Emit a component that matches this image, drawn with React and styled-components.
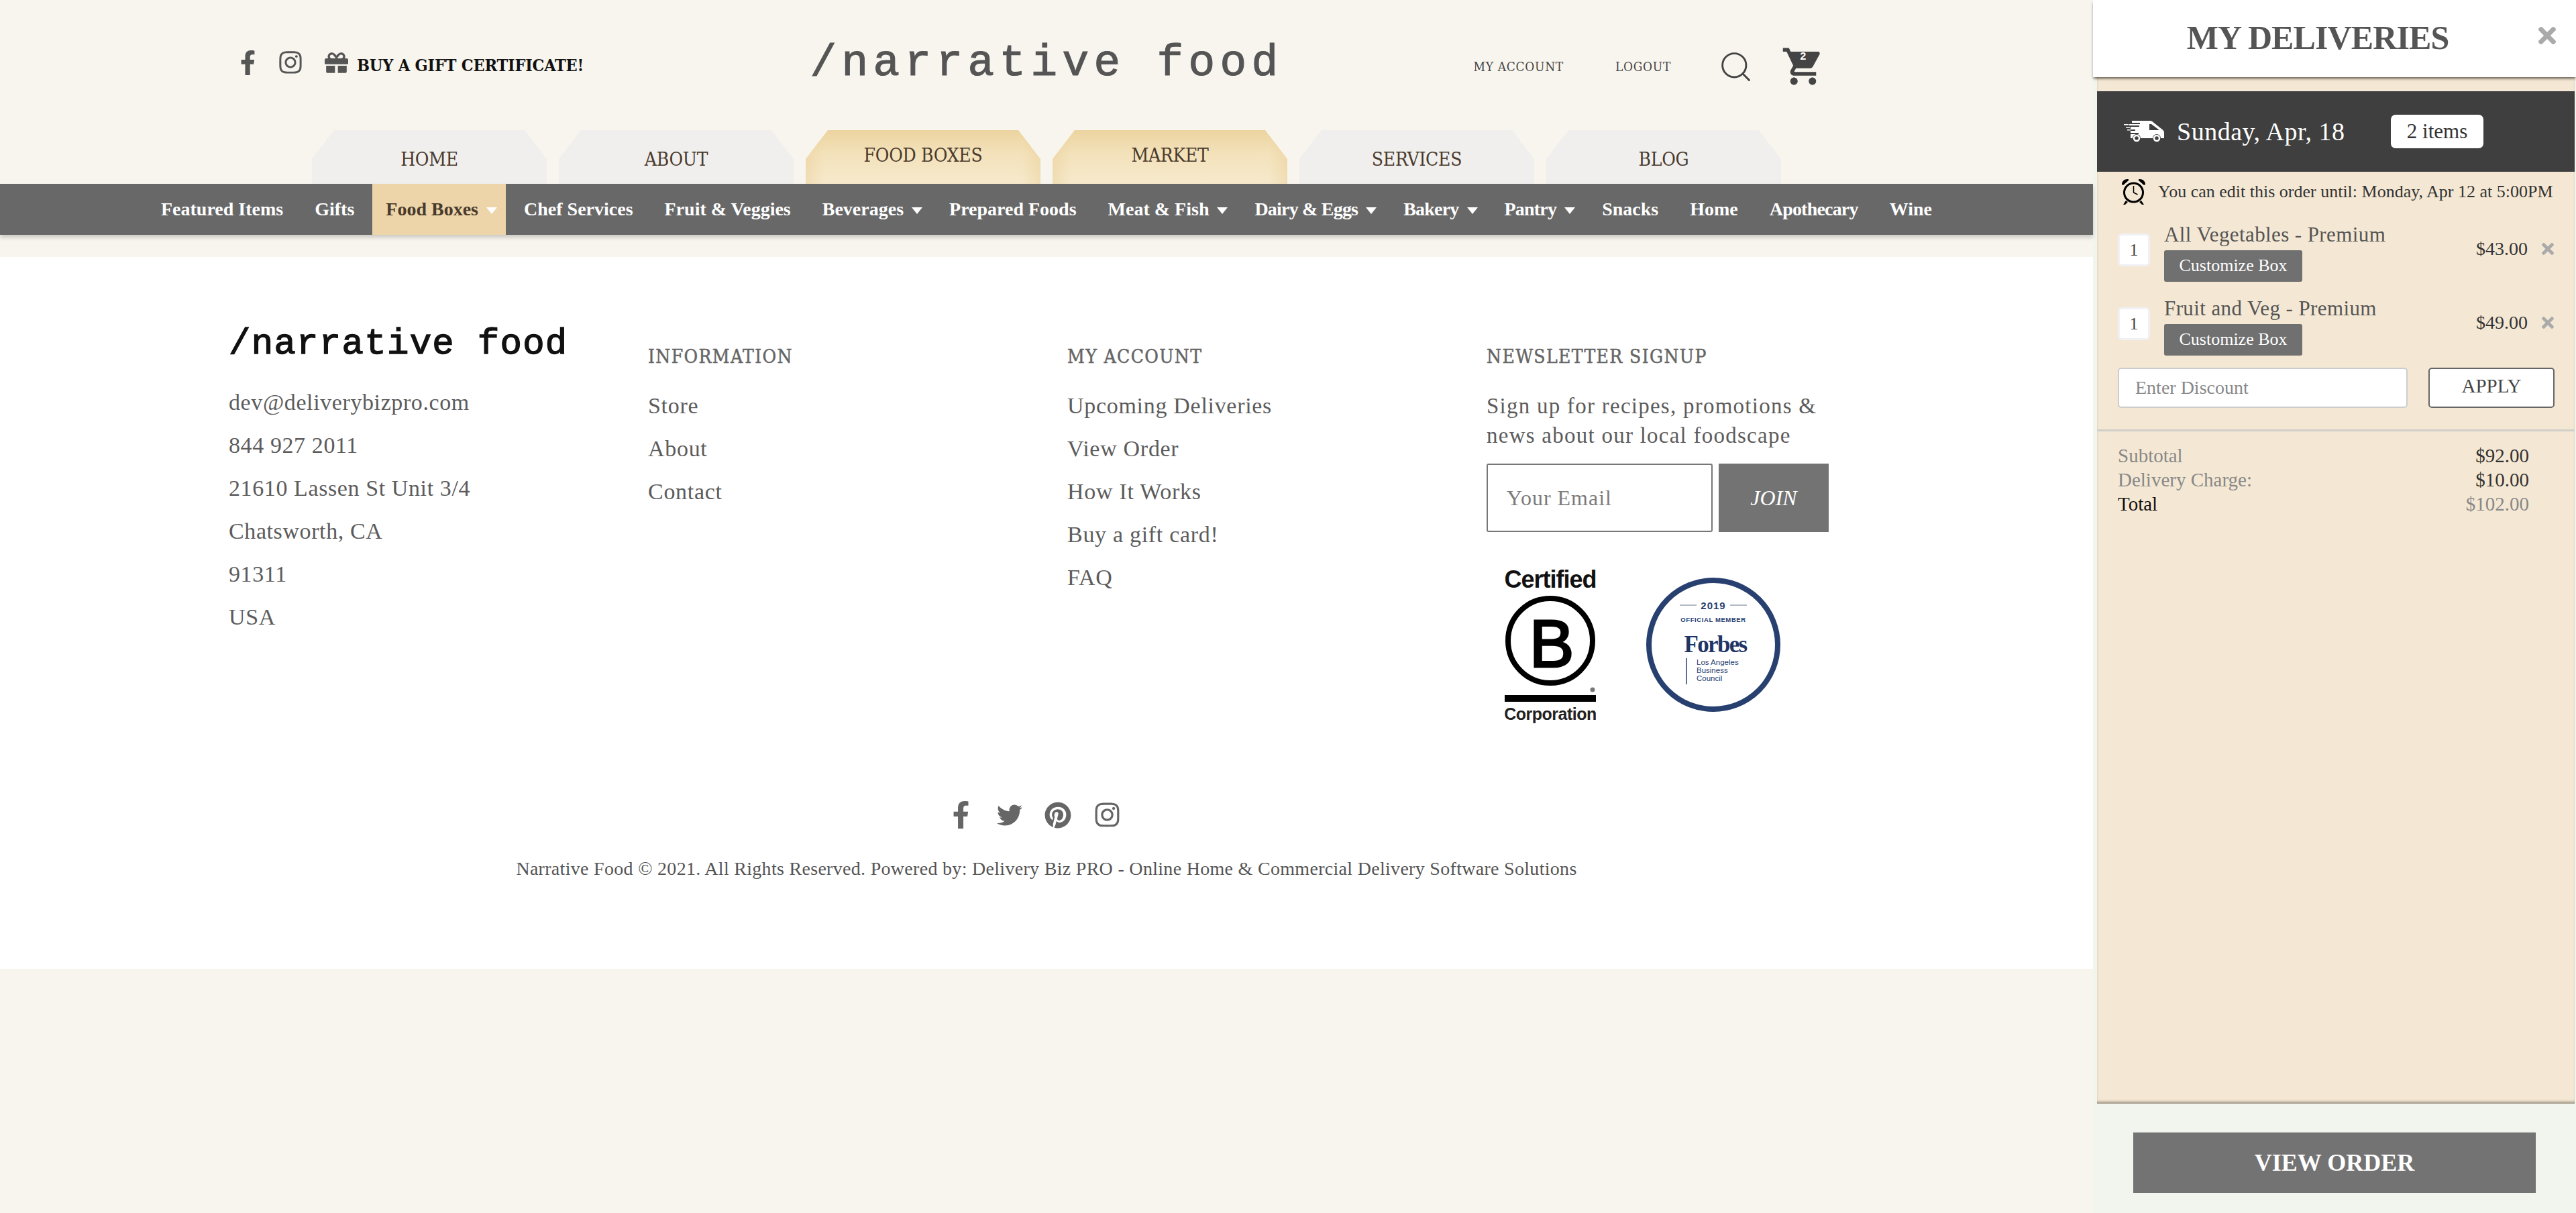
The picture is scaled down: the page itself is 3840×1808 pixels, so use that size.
import React from 'react'
import styled, { createGlobalStyle } from 'styled-components'
import { FaFacebookF, FaInstagram, FaGift, FaTwitter, FaPinterest, FaTimes } from 'react-icons/fa'
import { MdShoppingCart } from 'react-icons/md'
import { Search } from 'lucide-react'

const serif = '"Liberation Serif", "Times New Roman", serif'
const mono = '"Liberation Mono", "Courier New", monospace'
const slab = '"DejaVu Serif Condensed", "DejaVu Serif", serif'
const sans = '"Liberation Sans", Arial, sans-serif'

const tabs = [
  { label: 'HOME' },
  { label: 'ABOUT' },
  { label: 'FOOD BOXES', active: true },
  { label: 'MARKET', active: true },
  { label: 'SERVICES' },
  { label: 'BLOG' },
]

const navItems = [
  { label: 'Featured Items' },
  { label: 'Gifts' },
  { label: 'Food Boxes', arrow: true, active: true },
  { label: 'Chef Services' },
  { label: 'Fruit & Veggies' },
  { label: 'Beverages', arrow: true },
  { label: 'Prepared Foods' },
  { label: 'Meat & Fish', arrow: true },
  { label: 'Dairy & Eggs', arrow: true, tight: true },
  { label: 'Bakery', arrow: true, tight: true },
  { label: 'Pantry', arrow: true, tight: true },
  { label: 'Snacks' },
  { label: 'Home' },
  { label: 'Apothecary', tight: true },
  { label: 'Wine' },
]

const contactLines = ['dev@deliverybizpro.com', '844 927 2011', '21610 Lassen St Unit 3/4', 'Chatsworth, CA', '91311', 'USA']
const infoLinks = ['Store', 'About', 'Contact']
const accountLinks = ['Upcoming Deliveries', 'View Order', 'How It Works', 'Buy a gift card!', 'FAQ']

const orderItems = [
  { name: 'All Vegetables - Premium', price: '$43.00' },
  { name: 'Fruit and Veg - Premium', price: '$49.00' },
]

const TruckIcon = () => (
  <svg width="60" height="32" viewBox="0 0 60 32">
    <path d="M12 0h27c2 0 3 .5 4.500 2L56 12c2.500 1.500 4 3 4 6v8h-5a6 6 0 0 0-12 0H25a6 6 0 0 0-12 0h-3v-6h12v-2H10v-3h7v-2H10V9h13V7H8V5h16V3H12z" fill="#fff" />
    <path d="M41 5h-3v9h15z" fill="#3f3f3f" />
    <path d="M0 5h7v1.500H0zM3 9h6v1.500H3zM5 13h5v1.500H5z" fill="#fff" />
    <circle cx="19" cy="26" r="4" fill="none" stroke="#fff" strokeWidth="2.500" />
    <circle cx="49" cy="26" r="4" fill="none" stroke="#fff" strokeWidth="2.500" />
  </svg>
)

const AlarmIcon = () => (
  <svg width="37" height="40" viewBox="0 0 37 40">
    <circle cx="18.500" cy="21" r="14" fill="none" stroke="#000" strokeWidth="3" />
    <path d="M1 9c0-5 4-8.500 9.500-8l1 1.500L3 10zM36 9c0-5-4-8.500-9.500-8l-1 1.500L34 10z" fill="#000" />
    <path d="M7 33l-4 6h3l4-4zM30 33l4 6h-3l-4-4z" fill="#000" />
    <path d="M18.500 11v10l6 3" fill="none" stroke="#000" strokeWidth="1.500" />
  </svg>
)

const BCorpBadge = () => (
  <BCorpSvg width="136" height="241" viewBox="0 -8 136 241">
    <text x="68" y="26" textAnchor="middle" fontFamily={sans} fontWeight="700" fontSize="36" letterSpacing="-1" fill="#111">Certified</text>
    <circle cx="68" cy="105" r="63" fill="none" stroke="#000" strokeWidth="8" />
    <text x="70" y="144" textAnchor="middle" fontFamily={sans} fontSize="100" fill="#000" stroke="#000" strokeWidth="3">B</text>
    <circle cx="131" cy="178" r="3.500" fill="#777" />
    <rect x="0" y="186" width="136" height="10" fill="#000" />
    <text x="68" y="223" textAnchor="middle" fontFamily={sans} fontWeight="700" fontSize="25" letterSpacing="-0.5" fill="#222">Corporation</text>
  </BCorpSvg>
)

const ForbesBadge = () => (
  <svg width="200" height="200" viewBox="0 0 200 200">
    <circle cx="100" cy="100" r="96" fill="#fff" stroke="#27406f" strokeWidth="8" />
    <path d="M50 41h25M125 41h25" stroke="#9aa3b5" strokeWidth="1.500" />
    <text x="100" y="47" textAnchor="middle" fontFamily={sans} fontSize="15" fontWeight="700" letterSpacing="1" fill="#27406f">2019</text>
    <text x="100" y="66" textAnchor="middle" fontFamily={sans} fontSize="9.500" fontWeight="700" letterSpacing="0.6" fill="#27406f">OFFICIAL MEMBER</text>
    <text x="103" y="111" textAnchor="middle" fontFamily={serif} fontSize="35" fontWeight="700" letterSpacing="-1.700" fill="#1f3566">Forbes</text>
    <path d="M60 120v39" stroke="#27406f" strokeWidth="1.500" />
    <text x="75" y="130" fontFamily={sans} fontSize="11.500" fill="#27406f">Los Angeles</text>
    <text x="75" y="142" fontFamily={sans} fontSize="11.500" fill="#27406f">Business</text>
    <text x="75" y="154" fontFamily={sans} fontSize="11.500" fill="#27406f">Council</text>
  </svg>
)

const App = () => (
  <Page>
    <GlobalStyle />
    <Main>
      <Header>
        <HeaderLeft>
          <SocialIcon $mr={26}><FaFacebookF size={37} /></SocialIcon>
          <SocialIcon $mr={32}><FaInstagram size={38} /></SocialIcon>
          <SocialIcon $mr={13}><FaGift size={35} /></SocialIcon>
          <GiftLink>BUY A GIFT CERTIFICATE!</GiftLink>
        </HeaderLeft>
        <Logo>/narrative food</Logo>
        <HeaderRight>
          <AccountLink>MY ACCOUNT</AccountLink>
          <AccountLink>LOGOUT</AccountLink>
          <SearchWrap><Search size={53} strokeWidth={1.3} color="#444" /></SearchWrap>
          <Cart>
            <MdShoppingCart size={66} color="#444" />
            <CartCount>2</CartCount>
          </Cart>
        </HeaderRight>
      </Header>

      <TabRow>
        {tabs.map((tab) => (
          <Tab key={tab.label} $active={tab.active}>{tab.label}</Tab>
        ))}
      </TabRow>

      <NavBar>
        {navItems.map((item) => (
          <NavItem key={item.label} $active={item.active} $arrow={item.arrow} $tight={item.tight}>
            {item.label}
            {item.arrow && <NavArrow />}
          </NavItem>
        ))}
      </NavBar>

      <Footer>
        <FooterGrid>
          <FooterCol>
            <FooterLogo>/narrative food</FooterLogo>
            {contactLines.map((line) => (
              <ContactLine key={line}>{line}</ContactLine>
            ))}
          </FooterCol>
          <FooterCol>
            <ColHeading>INFORMATION</ColHeading>
            <LinkList>
              {infoLinks.map((link) => <FooterLink key={link}>{link}</FooterLink>)}
            </LinkList>
          </FooterCol>
          <FooterCol>
            <ColHeading>MY ACCOUNT</ColHeading>
            <LinkList>
              {accountLinks.map((link) => <FooterLink key={link}>{link}</FooterLink>)}
            </LinkList>
          </FooterCol>
          <FooterCol>
            <ColHeading>NEWSLETTER SIGNUP</ColHeading>
            <SignupText>Sign up for recipes, promotions &amp; news about our local foodscape</SignupText>
            <SignupForm>
              <EmailInput placeholder="Your Email" />
              <JoinButton>JOIN</JoinButton>
            </SignupForm>
            <Badges>
              <BCorpBadge />
              <ForbesWrap><ForbesBadge /></ForbesWrap>
            </Badges>
          </FooterCol>
        </FooterGrid>
        <FooterSocial>
          <FaFacebookF size={41} />
          <FaTwitter size={38} />
          <FaPinterest size={40} />
          <FaInstagram size={41} />
        </FooterSocial>
        <Copyright>Narrative Food © 2021. All Rights Reserved. Powered by: Delivery Biz PRO - Online Home &amp; Commercial Delivery Software Solutions</Copyright>
      </Footer>
    </Main>

    <Drawer>
      <DrawerHeader>
        <DrawerTitle>MY DELIVERIES</DrawerTitle>
        <CloseButton><FaTimes size={38} /></CloseButton>
      </DrawerHeader>
      <DrawerBody>
        <DeliveryBar>
          <TruckIcon />
          <DeliveryDate>Sunday, Apr, 18</DeliveryDate>
          <ItemCount>2 items</ItemCount>
        </DeliveryBar>
        <EditNote>
          <AlarmIcon />
          <span>You can edit this order until: Monday, Apr 12 at 5:00PM</span>
        </EditNote>
        {orderItems.map((item) => (
          <OrderRow key={item.name}>
            <QtyBox>1</QtyBox>
            <OrderInfo>
              <OrderName>{item.name}</OrderName>
              <CustomizeButton>Customize Box</CustomizeButton>
            </OrderInfo>
            <OrderPrice>{item.price}</OrderPrice>
            <RemoveButton><FaTimes size={26} /></RemoveButton>
          </OrderRow>
        ))}
        <DiscountRow>
          <DiscountInput placeholder="Enter Discount" />
          <ApplyButton>APPLY</ApplyButton>
        </DiscountRow>
        <Divider />
        <Totals>
          <TotalRow><TotalLabel>Subtotal</TotalLabel><TotalValue>$92.00</TotalValue></TotalRow>
          <TotalRow><TotalLabel>Delivery Charge:</TotalLabel><TotalValue>$10.00</TotalValue></TotalRow>
          <TotalRow><TotalLabel $strong>Total</TotalLabel><TotalValue $muted>$102.00</TotalValue></TotalRow>
        </Totals>
      </DrawerBody>
      <DrawerFooter>
        <ViewOrderButton>VIEW ORDER</ViewOrderButton>
      </DrawerFooter>
    </Drawer>
  </Page>
)

export default App

const GlobalStyle = createGlobalStyle`
  html, body {
    margin: 0;
    padding: 0;
    background: #f8f5ee;
    font-family: ${serif};
  }
  * {
    box-sizing: border-box;
  }
`

const Page = styled.div`
  display: flex;
  width: 3840px;
  height: 1808px;
  overflow: hidden;
  background: #f8f5ee;
`
const Main = styled.main`
  width: 3120px;
  flex: none;
`
const Header = styled.header`
  display: grid;
  grid-template-columns: 1fr auto 1fr;
  align-items: center;
  height: 194px;
  padding: 0 351px;
`
const HeaderLeft = styled.div`
  display: flex;
  align-items: center;
  padding-bottom: 8px;
`
const SocialIcon = styled.a`
  display: flex;
  color: #555;
  margin-right: ${(p) => p.$mr}px;
`
const GiftLink = styled.a`
  font-family: ${slab};
  font-weight: 700;
  font-size: 25px;
  letter-spacing: -0.2px;
  color: #111;
  padding-top: 8px;
  white-space: nowrap;
`
const Logo = styled.div`
  font-family: ${mono};
  font-size: 66px;
  letter-spacing: 7.4px;
  -webkit-text-stroke: 1.2px #555;
  color: #555;
  padding-bottom: 6px;
  white-space: nowrap;
`
const HeaderRight = styled.div`
  display: flex;
  align-items: center;
  justify-content: flex-end;
  padding-right: 48px;
  padding-top: 4px;
`
const AccountLink = styled.a`
  font-family: ${slab};
  font-size: 19px;
  letter-spacing: 0.7px;
  color: #444;
  margin-right: 77px;
  white-space: nowrap;
  &:nth-child(2) {
    margin-right: 70px;
  }
`
const SearchWrap = styled.span`
  display: flex;
  margin-right: 41px;
`
const Cart = styled.span`
  position: relative;
  display: flex;
`
const CartCount = styled.span`
  position: absolute;
  top: 10px;
  left: 28px;
  font-family: ${mono};
  font-weight: 700;
  font-size: 16px;
  color: #fff;
`
const TabRow = styled.div`
  display: flex;
  justify-content: center;
  gap: 18px;
  height: 80px;
`
const Tab = styled.div`
  width: 350px;
  height: 80px;
  display: flex;
  justify-content: center;
  align-items: center;
  padding-top: ${(p) => (p.$active ? '0' : '7px')};
  padding-bottom: ${(p) => (p.$active ? '5px' : '0')};
  font-family: ${slab};
  font-size: 28px;
  letter-spacing: -0.3px;
  color: #4a3a2c;
  clip-path: polygon(33px 0, 317px 0, 350px 43px, 350px 80px, 0 80px, 0 43px);
  background: ${(p) =>
    p.$active
      ? 'linear-gradient(90deg, rgba(230, 195, 130, 0.3), transparent 8%, transparent 92%, rgba(230, 195, 130, 0.3)), linear-gradient(#ecd4a0, #f3e2bb 45%, #f6e9cc)'
      : '#f0efed'};
`
const NavBar = styled.nav`
  display: flex;
  justify-content: center;
  gap: 7px;
  height: 76px;
  background: #686868;
  box-shadow: 0 4px 6px rgba(0, 0, 0, 0.18);
  position: relative;
`
const NavItem = styled.a`
  display: flex;
  align-items: center;
  padding: 0 ${(p) => (p.$arrow ? '13px' : '20px')} 0 20px;
  font-size: 28px;
  font-weight: 700;
  letter-spacing: ${(p) => (p.$tight ? '-0.8px' : '0')};
  white-space: nowrap;
  color: ${(p) => (p.$active ? '#4a3a2c' : '#fff')};
  background: ${(p) => (p.$active ? '#edd5a9' : 'transparent')};
`
const NavArrow = styled.i`
  margin-left: 12px;
  margin-top: 3px;
  width: 0;
  height: 0;
  border-left: 8px solid transparent;
  border-right: 8px solid transparent;
  border-top: 10px solid #fff;
`
const Footer = styled.footer`
  margin-top: 33px;
  height: 1061px;
  background: #fff;
  padding-top: 100px;
`
const FooterGrid = styled.div`
  display: grid;
  grid-template-columns: repeat(4, 625px);
  padding-left: 341px;
  height: 711px;
`
const FooterCol = styled.div`
  padding-top: 0;
`
const FooterLogo = styled.div`
  font-family: ${mono};
  font-size: 54px;
  line-height: 60px;
  letter-spacing: 1.3px;
  -webkit-text-stroke: 1.4px #111;
  color: #111;
  margin-bottom: 25px;
  white-space: nowrap;
`
const ContactLine = styled.div`
  font-size: 34px;
  line-height: 64px;
  letter-spacing: 0.6px;
  color: #5c5c5c;
`
const ColHeading = styled.h4`
  margin: 29px 0 21px;
  font-family: ${slab};
  font-size: 28px;
  line-height: 40px;
  font-weight: 400;
  letter-spacing: 1.35px;
  -webkit-text-stroke: 0.5px #666;
  color: #666;
  white-space: nowrap;
`
const LinkList = styled.div`
  display: flex;
  flex-direction: column;
`
const FooterLink = styled.a`
  font-size: 34px;
  line-height: 64px;
  letter-spacing: 0.7px;
  color: #5c5c5c;
`
const SignupText = styled.p`
  margin: 31px 0 20px;
  width: 520px;
  font-size: 33px;
  line-height: 44px;
  letter-spacing: 1.25px;
  color: #5c5c5c;
`
const SignupForm = styled.div`
  display: flex;
  gap: 9px;
  height: 102px;
`
const EmailInput = styled.input`
  width: 337px;
  height: 102px;
  padding: 0 28px;
  border: 2px solid #777;
  border-radius: 3px;
  font-family: ${serif};
  font-size: 32px;
  letter-spacing: 1px;
  background: #fff;
  &::placeholder {
    color: #7b7b7b;
    opacity: 1;
  }
`
const JoinButton = styled.button`
  width: 164px;
  height: 102px;
  border: 0;
  background: #737373;
  color: #fff;
  font-family: ${serif};
  font-style: italic;
  font-size: 32px;
`
const Badges = styled.div`
  display: flex;
  gap: 75px;
  margin-top: 57px;
  padding-left: 27px;
`
const BCorpSvg = styled.svg`
  margin-top: -8px;
`
const ForbesWrap = styled.div`
  margin-top: 11px;
`
const FooterSocial = styled.div`
  display: flex;
  justify-content: center;
  align-items: center;
  gap: 33px;
  height: 41px;
  padding-right: 37px;
  color: #666;
`
const Copyright = styled.div`
  margin-top: 40px;
  text-align: center;
  font-size: 28px;
  line-height: 40px;
  letter-spacing: 0.3px;
  color: #555;
`
const Drawer = styled.aside`
  width: 720px;
  flex: none;
  display: flex;
  flex-direction: column;
  background: #f2f4ee;
`
const DrawerHeader = styled.div`
  position: relative;
  z-index: 1;
  display: flex;
  justify-content: center;
  height: 115px;
  padding: 27px 50px 0 0;
  background: #fff;
  box-shadow: 0 3px 4px -1px rgba(50, 40, 30, 0.75);
`
const DrawerTitle = styled.h2`
  margin: 0;
  font-size: 50px;
  line-height: 58px;
  font-weight: 700;
  letter-spacing: -0.9px;
  color: #555;
`
const CloseButton = styled.span`
  position: absolute;
  top: 34px;
  right: 24px;
  display: flex;
  color: #aaa;
`
const DrawerBody = styled.div`
  flex: 1;
  margin: 0 2px 0 6px;
  padding-top: 21px;
  background: #f4e8d4;
  box-shadow: inset 0 -4px 4px -2px #857c6c;
`
const DeliveryBar = styled.div`
  display: flex;
  align-items: center;
  height: 120px;
  padding-left: 40px;
  background: #3f3f3f;
`
const DeliveryDate = styled.span`
  width: 338px;
  padding-left: 19px;
  font-size: 38px;
  letter-spacing: 0.5px;
  color: #fff;
`
const ItemCount = styled.span`
  width: 138px;
  height: 50px;
  border-radius: 7px;
  background: #fff;
  color: #333;
  font-size: 31px;
  line-height: 50px;
  text-align: center;
`
const EditNote = styled.div`
  display: flex;
  align-items: center;
  gap: 18px;
  height: 40px;
  margin-top: 10px;
  padding-left: 36px;
  font-size: 26px;
  color: #333;
  white-space: nowrap;
`
const OrderRow = styled.div`
  display: grid;
  grid-template-columns: 48px 1fr auto 18px;
  column-gap: 21px;
  align-items: center;
  height: 90px;
  margin-top: 20px;
  padding: 0 31px;
  &:nth-of-type(3) {
    margin-top: 24px;
  }
`
const QtyBox = styled.div`
  width: 48px;
  height: 49px;
  margin-bottom: 6px;
  border: 3px solid #f0f0f5;
  border-radius: 6px;
  background: #fff;
  font-size: 26px;
  line-height: 43px;
  text-align: center;
  color: #444;
`
const OrderInfo = styled.div`
  display: flex;
  flex-direction: column;
  align-items: flex-start;
`
const OrderName = styled.div`
  height: 42px;
  font-size: 31px;
  line-height: 38px;
  letter-spacing: 0.4px;
  color: #555;
  white-space: nowrap;
`
const CustomizeButton = styled.button`
  width: 206px;
  height: 47px;
  padding: 0;
  border: 0;
  border-radius: 3px;
  background: #707070;
  color: #fff;
  font-family: ${serif};
  font-size: 26px;
`
const OrderPrice = styled.div`
  margin-bottom: 9px;
  font-size: 28px;
  color: #333;
`
const RemoveButton = styled.span`
  display: flex;
  justify-content: center;
  margin-bottom: 9px;
  color: #aaa;
`
const DiscountRow = styled.div`
  display: flex;
  gap: 31px;
  margin-top: 18px;
  padding-left: 31px;
`
const DiscountInput = styled.input`
  width: 432px;
  height: 60px;
  padding: 0 24px;
  border: 2px solid #ccc;
  border-radius: 5px;
  background: #fff;
  font-family: ${serif};
  font-size: 28px;
  &::placeholder {
    color: #888;
    opacity: 1;
  }
`
const ApplyButton = styled.button`
  width: 188px;
  height: 60px;
  padding: 0 0 6px;
  border: 2px solid #666;
  border-radius: 5px;
  background: #fff;
  color: #444;
  font-family: ${serif};
  font-size: 29px;
`
const Divider = styled.hr`
  height: 3px;
  margin: 32px 0 0;
  border: 0;
  background: #d0cfc9;
`
const Totals = styled.div`
  margin-top: 18px;
  padding: 0 68px 0 31px;
`
const TotalRow = styled.div`
  display: flex;
  justify-content: space-between;
  height: 36px;
  font-size: 29px;
  line-height: 36px;
`
const TotalLabel = styled.span`
  color: ${(p) => (p.$strong ? '#111' : '#888')};
`
const TotalValue = styled.span`
  color: ${(p) => (p.$muted ? '#888' : '#333')};
`
const DrawerFooter = styled.div`
  height: 163px;
  padding: 43px 60px 0;
`
const ViewOrderButton = styled.button`
  width: 600px;
  height: 90px;
  border: 0;
  background: #737373;
  color: #fff;
  font-family: ${serif};
  font-size: 36px;
  font-weight: 700;
`
